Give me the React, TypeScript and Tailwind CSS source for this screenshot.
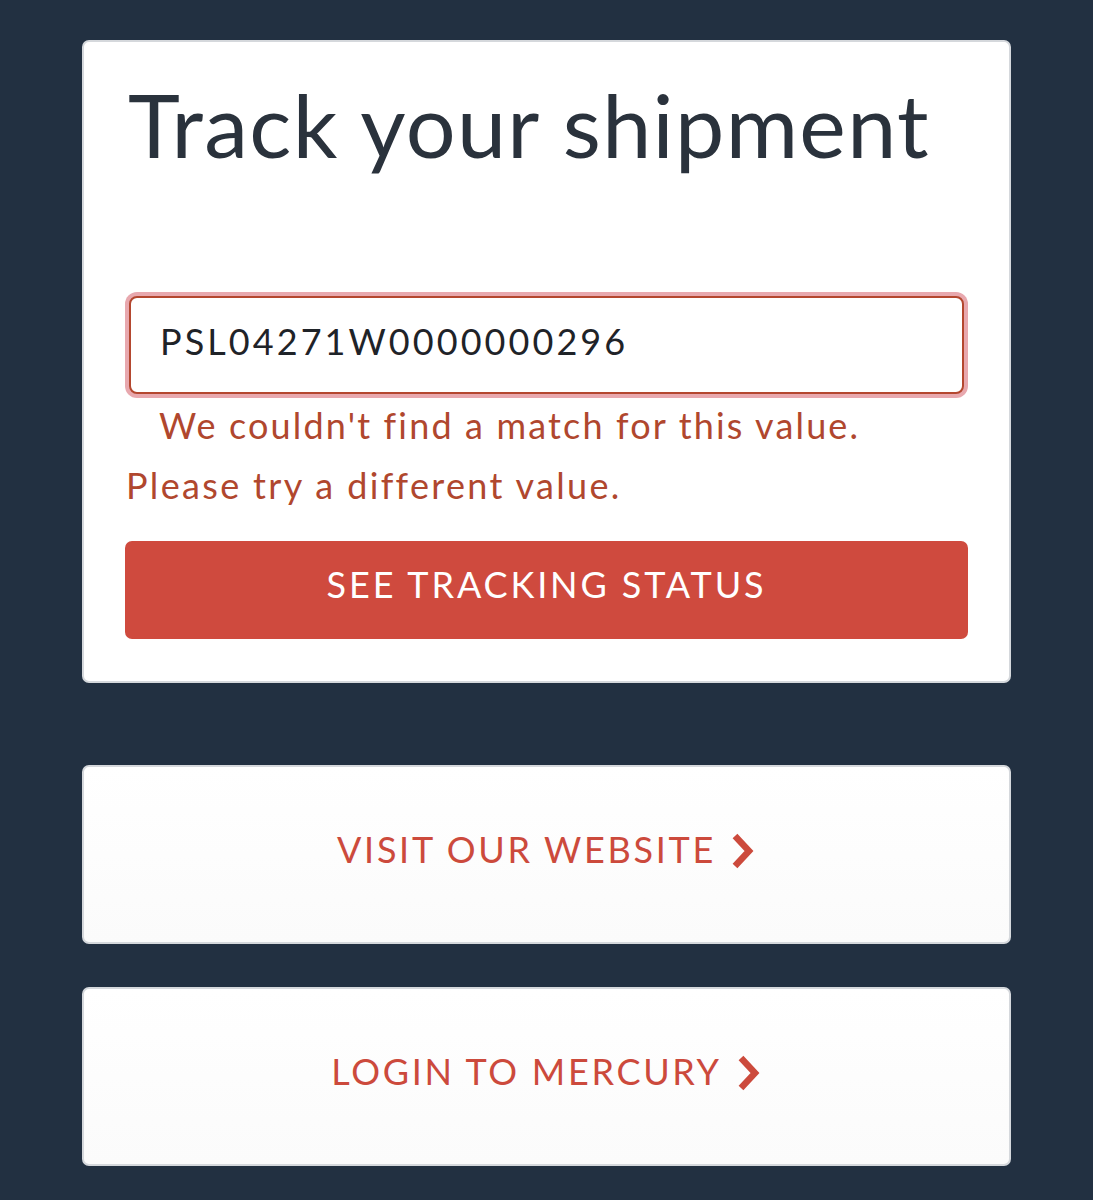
import React from "react";

function Chevron() {
  return (
    <svg width="26" height="36" viewBox="0 0 26 36" className="ml-[14px] shrink-0" aria-hidden>
      <path d="M5 3 L19 18 L5 33" fill="none" stroke="#cc4a3c" strokeWidth="6.5" strokeLinejoin="miter" />
    </svg>
  );
}

function LinkCard({ label }: { label: string }) {
  return (
    <a
      href="#"
      className="flex h-[179px] items-center justify-center rounded-[7px] border-2 border-[#d5d8dc] bg-gradient-to-b from-white to-[#fbfbfb] pb-[8px] text-[36px] tracking-[0.075em] text-[#cc4a3c]"
    >
      <span className="leading-none pb-[4px]">{label}</span>
      <Chevron />
    </a>
  );
}

export default function App() {
  return (
    <div
      className="min-h-[1200px] bg-[#223041] px-[82px] pt-[40px] pb-[32px]"
      style={{ fontFamily: "Lato, 'Noto Sans', sans-serif" }}
    >
      {/* Tracking form */}
      <div className="rounded-[7px] border-2 border-[#d5d8dc] bg-white px-[41px] pt-[30px] pb-[42px]">
        <h1 className="pl-[3px] text-[88px] font-normal leading-[1.2] tracking-[0.015em] text-[#2a323c]">
          Track your shipment
        </h1>

        <div className="mt-[114px] rounded-[12px] bg-[#e8a8ae] p-[4px]">
          <input
            readOnly
            value="PSL04271W0000000296"
            className="block h-[98px] w-full rounded-[8px] border-2 border-[#b4472f] bg-white px-[29px] pb-[8px] text-[36px] tracking-[0.085em] text-[#1f2328] outline-none"
          />
        </div>

        <p className="mt-[2px] pl-[34px] text-[36px] leading-[1.4] tracking-[0.06em] text-[#b0472e]">
          We couldn't find a match for this value.
        </p>
        <p className="mt-[10px] pl-[1px] text-[36px] leading-[1.4] tracking-[0.065em] text-[#b0472e]">
          Please try a different value.
        </p>

        <button
          type="button"
          className="mt-[31px] flex h-[98px] w-full items-center justify-center rounded-[7px] bg-[#cf4a3e] text-[36px] tracking-[0.08em] text-white"
        >
          <span className="pb-[12px] leading-none">SEE TRACKING STATUS</span>
        </button>
      </div>

      <div className="mt-[82px] flex flex-col gap-[43px]">
        <LinkCard label="VISIT OUR WEBSITE" />
        <LinkCard label="LOGIN TO MERCURY" />
      </div>
    </div>
  );
}
